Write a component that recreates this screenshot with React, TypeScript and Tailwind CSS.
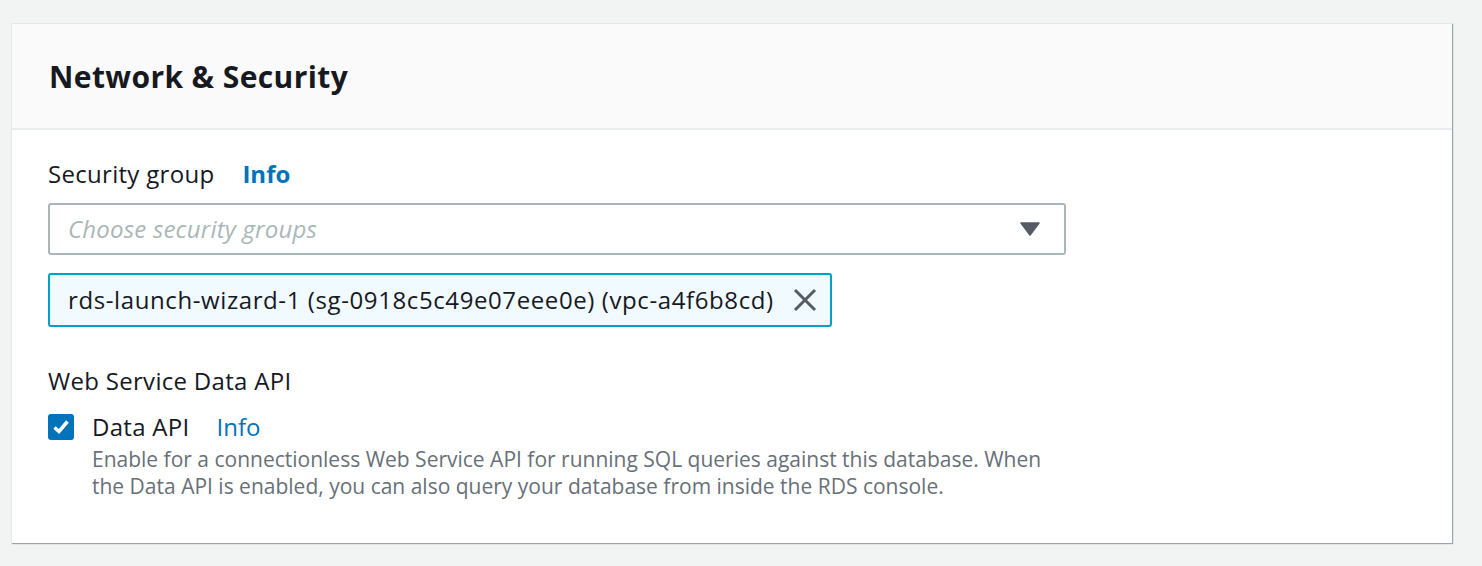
import React from "react";

const font = { fontFamily: '"Open Sans", "Noto Sans", Arial, sans-serif' };

const App = () => {
  return (
    <div className="w-[1482px] h-[566px] bg-[#f2f3f3] pt-[23px] pl-[11px]" style={font}>
      <div className="w-[1441px] h-[520px] bg-white border-l border-t border-[#e5e8e8] shadow-[1px_1px_1px_0_#9aa5a6] flex flex-col">
        <div className="h-[106px] bg-[#fafafa] border-b-2 border-[#eaeded] pl-[37px] flex items-center">
          <h2 className="text-[30px] font-bold text-[#16191f] tracking-[0.4px]">Network &amp; Security</h2>
        </div>
        <div className="pl-[36px] pt-[28px] flex flex-col">
          <div className="flex items-center gap-[28px] h-[32px]">
            <span className="text-[24px] tracking-[0.3px] text-[#16191f]">Security group</span>
            <span className="text-[24px] font-bold text-[#0073bb]">Info</span>
          </div>
          <div className="mt-[13px] w-[1018px] h-[52px] border-2 border-[#aab7b8] rounded-[3px] flex items-center justify-between pl-[18px] pr-[24px]">
            <span className="text-[24px] italic tracking-[0.2px] text-[#aab7b8]">Choose security groups</span>
            <svg width="20" height="14" viewBox="0 0 20 14">
              <path d="M1 1 L19 1 L10 13 Z" fill="#545b64" stroke="#545b64" strokeWidth="1.5" strokeLinejoin="round" />
            </svg>
          </div>
          <div className="mt-[18px] w-[784px] h-[54px] bg-[#f1faff] border-2 border-[#00a1c9] rounded-[3px] flex items-center pl-[18px] pr-[12px] justify-between">
            <span className="text-[24px] tracking-[0.6px] text-[#16191f]">rds-launch-wizard-1 (sg-0918c5c49e07eee0e) (vpc-a4f6b8cd)</span>
            <svg width="26" height="26" viewBox="0 0 26 26">
              <path d="M3 3 L23 23 M23 3 L3 23" stroke="#545b64" strokeWidth="3" />
            </svg>
          </div>
          <div className="mt-[38px] text-[24px] tracking-[0.3px] text-[#16191f] h-[32px] flex items-center">Web Service Data API</div>
          <div className="mt-[15px] flex items-start">
            <div className="w-[26px] h-[26px] mt-[2px] bg-[#0073bb] rounded-[3px] flex items-center justify-center">
              <svg width="22" height="22" viewBox="0 0 22 22">
                <path d="M4.5 11.5 L9 15.5 L17.5 5.5" stroke="white" strokeWidth="3.5" fill="none" />
              </svg>
            </div>
            <div className="ml-[18px] flex flex-col">
              <div className="flex items-center gap-[27px] h-[30px]">
                <span className="text-[24px] tracking-[0.3px] text-[#16191f]">Data API</span>
                <span className="text-[24px] text-[#0073bb]">Info</span>
              </div>
              <p className="mt-[4px] text-[21px] leading-[27px] text-[#687078] w-[965px]">
                Enable for a connectionless Web Service API for running SQL queries against this database. When the Data API is enabled, you can also query your database from inside the RDS console.
              </p>
            </div>
          </div>
        </div>
      </div>
    </div>
  );
};

export default App;
